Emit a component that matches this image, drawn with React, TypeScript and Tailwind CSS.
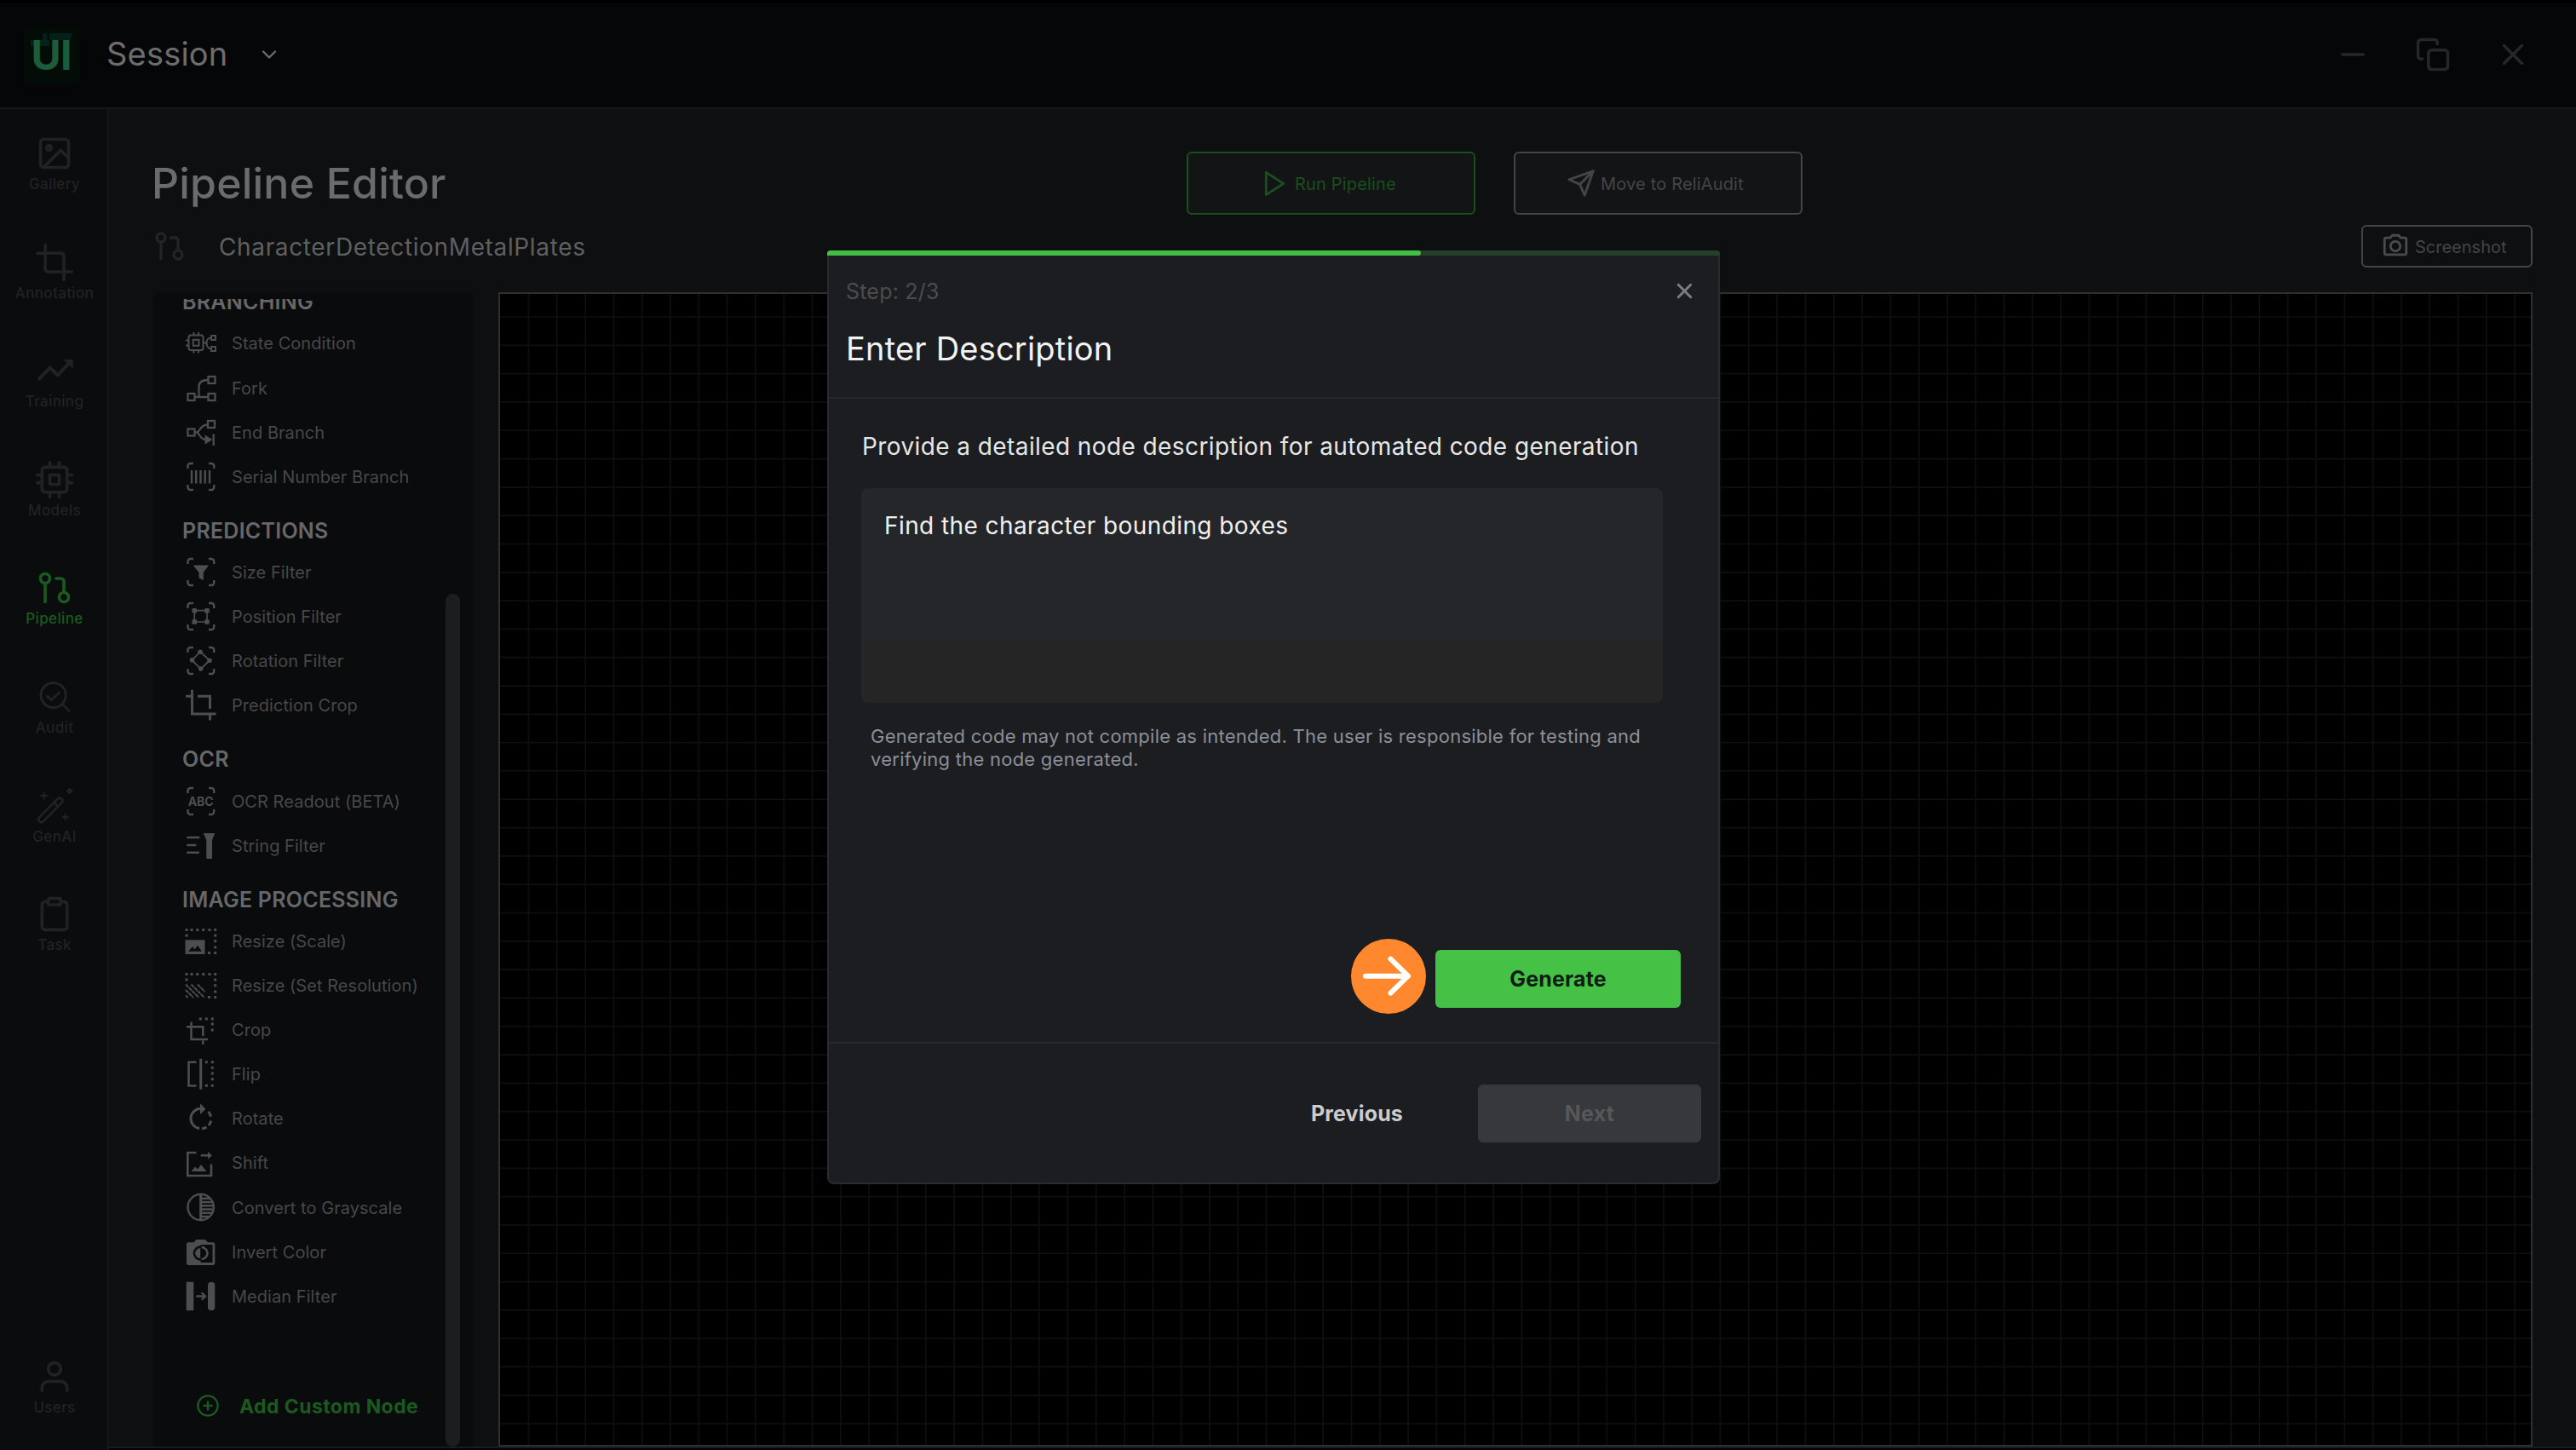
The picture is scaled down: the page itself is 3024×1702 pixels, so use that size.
import React from "react";
import { FiImage, FiCrop, FiCpu, FiGitPullRequest, FiClipboard, FiUser, FiPlay, FiSend, FiCopy, FiX, FiMinus, FiChevronDown, FiPlusCircle } from "react-icons/fi";
import { MdOutlineCameraAlt } from "react-icons/md";

/* ---------- sidebar icons ---------- */

function TrainingIcon() {
    return (
        <svg viewBox="0 0 44 44" className="size-11" fill="none" stroke="currentColor" strokeWidth="4" strokeLinecap="round" strokeLinejoin="round">
            <path d="M4.2 31.5 16.7 18.7l9 8.8L38 14.5" />
            <path d="M33 9h10.7v11z" fill="currentColor" stroke="none" />
        </svg>
    );
}

function AuditIcon() {
    return (
        <svg viewBox="0 0 44 44" className="size-11" fill="none" stroke="currentColor" strokeWidth="3">
            <circle cx="20.7" cy="20" r="14.6" />
            <path d="m31 30.5 9 8.5M12.5 20.5l5.8 5 10.2-9.5" />
        </svg>
    );
}

function WandIcon() {
    return (
        <svg viewBox="0 0 44 44" className="size-11" fill="none" stroke="currentColor" strokeWidth="2.6" strokeLinecap="round" strokeLinejoin="round">
            <path d="M25.8 13.4a2.6 2.6 0 0 1 3.8 0l1 1a2.6 2.6 0 0 1 0 3.8L9 40.2a3.4 3.4 0 0 1-4.9-4.9z" />
            <path d="m21.5 18 4.500 4.500" />
            <path d="M9.700 6.500v7M6.200 10h7M34.700 31.500v7M31.500 35h6.500" strokeWidth="2" />
            <path d="M39.700 0.500l4 4-4 4-4-4z" fill="currentColor" stroke="none" />
        </svg>
    );
}

const navItems = [
    { label: "Gallery", icon: <FiImage className="size-11" /> },
    { label: "Annotation", icon: <FiCrop className="size-11" /> },
    { label: "Training", icon: <TrainingIcon /> },
    { label: "Models", icon: <FiCpu className="size-11" /> },
    { label: "Pipeline", icon: <FiGitPullRequest className="size-11" />, active: true },
    { label: "Audit", icon: <AuditIcon /> },
    { label: "GenAI", icon: <WandIcon /> },
    { label: "Task", icon: <FiClipboard className="size-11" /> },
];

function NavItem({ label, icon, active }: { label: string; icon: React.ReactNode; active?: boolean }) {
    return (
        <div className={"flex flex-col items-center gap-1 " + (active ? "text-[#1b5a1e]" : "text-[#212224]")}>
            {icon}
            <span className="h-5 text-[17px] leading-5 font-medium tracking-[0.35px]">{label}</span>
        </div>
    );
}

/* ---------- node icons, all on a 36px grid ---------- */

const corners = <path d="M2.500 9V6a3 3 0 0 1 3-3H9M27 3h3.200a3 3 0 0 1 3 3v3M33.200 28v3a3 3 0 0 1-3 3H27M9 34H5.500a3 3 0 0 1-3-3v-3" strokeWidth="2.400" />;

function Dots({ points }: { points: number[][] }) {
    return (
        <g fill="currentColor" stroke="none">
            {points.map(([x, y]) => (
                <rect key={x + "-" + y} x={x - 1.5} y={y - 1.5} width="3" height="3" />
            ))}
        </g>
    );
}

const resizeDots = [[1, 5.5], [7, 5.5], [13.7, 5.5], [20.7, 5.5], [28, 5.5], [34.7, 5.5], [1, 12], [34.7, 12], [34.7, 18.7], [34.7, 26], [34.7, 32.5], [27.5, 32.5]];

const icons: Record<string, React.ReactNode> = {
    state: (
        <g strokeWidth="2">
            <rect x="3.5" y="9.5" width="17" height="17.5" rx="2.5" />
            <rect x="8.8" y="14.8" width="6.7" height="7" />
            <path d="M9.500 9.500V6M15 9.500V6M9.500 27v3.500M15 27v3.500M3.500 15.500H0M3.500 21.500H0M20.500 18.500h4M30 12.500h-.5c-3 0-5 2.500-5 6s2 6.800 5 6.800h.5" />
            <rect x="30" y="10" width="5" height="5" />
            <rect x="30" y="23" width="5" height="5" />
        </g>
    ),
    fork: (
        <g strokeWidth="2.3">
            <rect x="26.5" y="5" width="8" height="8" />
            <rect x="2.5" y="25" width="8" height="8" />
            <rect x="26.5" y="25" width="8" height="8" />
            <path d="M10.500 29h16M15.500 29V17c0-5 3-8 11-8" />
        </g>
    ),
    endBranch: (
        <g strokeWidth="2.3">
            <rect x="2.5" y="14.5" width="8" height="8" />
            <rect x="26" y="5" width="8" height="8" />
            <path d="M10.500 18.500h2.500c4 0 3-9 13-9M13 18.500c3 0 3 8.500 11 8.500M32.700 20.500V34" />
            <path d="M22.500 21.500 31.500 27l-9 5.500z" fill="currentColor" stroke="none" />
        </g>
    ),
    serial: (
        <>
            {corners}
            <path d="M7 11v15.500M12.200 11v15.500M17.500 11v15.500M22.700 11v15.500M28 11v15.500" strokeWidth="2.4" />
        </>
    ),
    sizeFilter: (
        <>
            {corners}
            <path d="M8.700 10.500h18.300l-6.200 8.500v9l-5.300-2.500V19z" fill="currentColor" stroke="none" />
        </>
    ),
    positionFilter: (
        <>
            {corners}
            <path d="M10.300 11.700H25V25H10.300z" strokeWidth="1.7" />
            <g fill="currentColor" stroke="none">
                <rect x="7.5" y="9" width="5.5" height="5.5" rx="1" />
                <rect x="22.3" y="9" width="5.5" height="5.5" rx="1" />
                <rect x="7.5" y="22.3" width="5.5" height="5.5" rx="1" />
                <rect x="22.3" y="22.3" width="5.5" height="5.5" rx="1" />
            </g>
        </>
    ),
    rotationFilter: (
        <>
            {corners}
            <path d="M17 8 28 18 17.700 28.500 7.500 18z" strokeWidth="1.8" />
            <g fill="currentColor" stroke="none">
                <circle cx="17" cy="8.3" r="2.8" />
                <circle cx="28" cy="18.3" r="2.8" />
                <circle cx="17.7" cy="28" r="2.8" />
                <circle cx="7.5" cy="17.7" r="2.8" />
            </g>
        </>
    ),
    predictionCrop: <path d="M7.500.7V29h28M0 8.300h7.500M14 8.300h14.500V23M28.500 29v7.500" strokeWidth="3" />,
    ocr: (
        <>
            {corners}
            <text x="17.7" y="23.5" textAnchor="middle" fill="currentColor" stroke="none" className="font-[Inter] text-[14px] font-bold">ABC</text>
        </>
    ),
    stringFilter: (
        <>
            <path d="M1.300 9h15M1.300 18h11M1.300 26.700h14.500" strokeWidth="2.5" />
            <path d="M20.700 4h13.600l-3.300 8v22h-6.700V12z" fill="currentColor" stroke="none" />
        </>
    ),
    resizeScale: (
        <>
            <Dots points={resizeDots} />
            <path d="M-.5 17.300h23v16.700h-23zM3 30.700h16l-5-7-3.500 4.500-2.500-3z" fill="currentColor" fillRule="evenodd" stroke="none" />
        </>
    ),
    resizeSet: (
        <>
            <Dots points={resizeDots} />
            <path d="M0 17.500 15.500 33M0 24l9 9M0 30.500 2.500 33M6.500 17.500 22 33M14 17.500l8.500 8.500" strokeWidth="2" strokeDasharray="4.5 0.8" />
        </>
    ),
    crop: (
        <>
            <path d="M6.500 9.500V30H26M1 15.300h19.300V26M20.300 31.500V36" strokeWidth="2.5" />
            <Dots points={[[17.3, 6], [24.3, 6], [31.3, 6], [31.3, 12], [31.3, 19]]} />
        </>
    ),
    flip: (
        <>
            <path d="M12.500 4.700H3.500v27.800h9" strokeWidth="2.6" />
            <path d="M17.700.7v36" strokeWidth="3" />
            <Dots points={[[24.3, 4.7], [31.3, 4.7], [31.3, 11.3], [31.3, 18], [31.3, 24.7], [31.3, 32.3], [24.3, 32.3]]} />
        </>
    ),
    rotate: (
        <>
            <path d="M18 7.300a11.700 11.700 0 0 0-1.800 23.300" strokeWidth="3" />
            <path d="M26.500 10.800a11.700 11.700 0 0 1 3 6M29.600 21.500a11.700 11.700 0 0 1-2.600 5.500M24.500 29a11.700 11.700 0 0 1-5.500 1.800" strokeWidth="3" />
            <path d="m17 1.300 6.500 6.400L17 14z" fill="currentColor" stroke="none" />
        </>
    ),
    shift: (
        <>
            <path d="M12.500 7H2.300v27H30V20.500" strokeWidth="2.6" />
            <path d="M17.700 10.200h10" strokeWidth="2.6" />
            <path d="m26 6 5 4.200-5 4.200zM6.500 29l4.500-5.500 3 3 4-5.500L24.500 29z" fill="currentColor" stroke="none" />
        </>
    ),
    grayscale: (
        <g strokeWidth="2.4">
            <circle cx="17.7" cy="18" r="15.2" />
            <path d="M17.700 3v30" strokeWidth="3" />
            <path d="M18 7.700h10.500M18 12h13.500M18 16.200h14.500M18 20.500h14.500M18 24.700h13M18 29h9.500" />
        </g>
    ),
    invert: (
        <>
            <path d="M12.500 4h10.500l3 3.300h6a2.300 2.300 0 0 1 2.300 2.300v22a2.300 2.300 0 0 1-2.300 2.400H3.300A2.300 2.300 0 0 1 1 31.600v-22a2.300 2.300 0 0 1 2.300-2.300h6.200z" fill="currentColor" stroke="none" />
            <path d="M17.700 10h13.800v21H17.700z" fill="#0a0b0d" stroke="none" />
            <circle cx="17.7" cy="20" r="9" fill="#0a0b0d" stroke="none" />
            <path d="M17.200 14v12a6 6 0 0 1 0-12z" fill="currentColor" stroke="none" />
            <path d="M18.500 13a7 7 0 0 1 0 14" strokeWidth="2.6" />
        </>
    ),
    median: (
        <>
            <rect x=".7" y="1.7" width="8.6" height="33.5" fill="currentColor" stroke="none" />
            <rect x="26" y="1.7" width="8.3" height="33.5" rx="4" fill="currentColor" stroke="none" />
            <path d="M12.300 18.500h10M18.700 14.200l4.300 4.300-4.300 4.300" strokeWidth="2.3" />
        </>
    ),
};

const groups = [
    {
        title: "BRANCHING",
        nodes: [["state", "State Condition"], ["fork", "Fork"], ["endBranch", "End Branch"], ["serial", "Serial Number Branch"]],
    },
    {
        title: "PREDICTIONS",
        nodes: [["sizeFilter", "Size Filter"], ["positionFilter", "Position Filter"], ["rotationFilter", "Rotation Filter"], ["predictionCrop", "Prediction Crop"]],
    },
    {
        title: "OCR",
        nodes: [["ocr", "OCR Readout (BETA)"], ["stringFilter", "String Filter"]],
    },
    {
        title: "IMAGE PROCESSING",
        nodes: [
            ["resizeScale", "Resize (Scale)"],
            ["resizeSet", "Resize (Set Resolution)"],
            ["crop", "Crop"],
            ["flip", "Flip"],
            ["rotate", "Rotate"],
            ["shift", "Shift"],
            ["grayscale", "Convert to Grayscale"],
            ["invert", "Invert Color"],
            ["median", "Median Filter"],
        ],
    },
];

function NodePanel() {
    return (
        <div className="flex h-full w-[376px] shrink-0 rounded-md bg-[#0a0b0d]">
            <div className="flex w-[343px] flex-col pt-2">
                {/* scrolled so that the first title is cut by the top edge */}
                <div className="flex-1 overflow-hidden">
                    <div className="-mt-[34.8px]">
                        {groups.map((group) => (
                            <div key={group.title}>
                                <h3 className="h-[60.2px] pt-[25px] pl-[34px] text-[25px] leading-[26px] font-semibold tracking-[0.25px] text-[#666768]">{group.title}</h3>
                                {group.nodes.map(([icon, label]) => (
                                    <div key={icon} className="flex h-[52.1px] items-center gap-[18px] pl-[38px]">
                                        <svg viewBox="0 0 36 36" className="size-9 shrink-0 overflow-visible text-[#4d4e50]" fill="none" stroke="currentColor">
                                            {icons[icon]}
                                        </svg>
                                        <span className="pt-0.5 text-[20px] tracking-[0.05px] whitespace-nowrap text-[#474849]">{label}</span>
                                    </div>
                                ))}
                            </div>
                        ))}
                    </div>
                </div>
                <button className="mb-7 flex h-10 items-center gap-[23px] pl-[50px] text-[#1b5a1e]">
                    <FiPlusCircle className="size-7" />
                    <span className="pt-0.5 text-[23px] font-bold tracking-[0.42px] whitespace-nowrap">Add Custom Node</span>
                </button>
            </div>
            <div className="mt-[354px] w-[17px] rounded-full bg-[#1c1d1f]"></div>
        </div>
    );
}

const GRID = 33.31;

function Canvas() {
    const columns = Array.from({ length: 71 }, (_, i) => 33.5 + i * GRID);
    const rows = Array.from({ length: 40 }, (_, i) => 27 + i * GRID);
    return (
        <div className="ml-[29px] h-full flex-1 overflow-hidden border-2 border-[#2e2f31] bg-black">
            <svg className="h-full w-full" stroke="#0d0f11" strokeWidth="1.7">
                {columns.map((x) => (
                    <line key={x} x1={x} x2={x} y1="0" y2="1360" />
                ))}
                {rows.map((y) => (
                    <line key={y} x1="0" x2="2400" y1={y} y2={y} />
                ))}
            </svg>
        </div>
    );
}

function DescriptionDialog() {
    return (
        <div className="absolute top-[294px] left-[971px] flex h-[1096px] w-[1048px] flex-col">
            <div className="h-1.5 shrink-0 overflow-hidden rounded-t-sm bg-[#24402a]">
                <div className="h-full w-[697px] rounded-r-sm bg-[#44bf44]"></div>
            </div>
            <div className="flex flex-1 flex-col rounded-b-lg border-2 border-t-0 border-[#2a2b30] bg-[#1c1d20]">
                <div className="border-b-2 border-[#27282c] pt-[27px] pr-[25px] pb-[34px] pl-5">
                    <div className="flex h-[30px] items-center justify-between">
                        <span className="pt-px text-[25px] tracking-[0.2px] text-[#4b4c4f]">Step: 2/3</span>
                        <FiX className="size-[29px] -translate-y-px text-[#7c7d80]" strokeWidth="2.4" />
                    </div>
                    <h2 className="mt-[29px] text-[38px] leading-[46px] tracking-[0.2px] text-[#f2f2f2]">Enter Description</h2>
                </div>
                <div className="flex flex-1 flex-col pt-[39px] pr-[44px] pb-10 pl-[38px]">
                    <p className="ml-px text-[28px] leading-[35px] tracking-[0.41px] whitespace-nowrap text-[#e6e6e7]">Provide a detailed node description for automated code generation</p>
                    <div className="mt-[31px] h-[252px] w-[941px] rounded-lg bg-linear-to-b from-[#25262a] from-70% to-[#252525] to-75% pt-[27px] pl-[27px]">
                        <p className="text-[28px] leading-[34px] tracking-[0.42px] text-[#f0f0f0]">Find the character bounding boxes</p>
                    </div>
                    <p className="mt-[26px] ml-[11px] w-[925px] text-[22px] leading-[27px] tracking-[0.25px] text-[#8b9098]">
                        Generated code may not compile as intended. The user is responsible for testing and verifying the node generated.
                    </p>
                    <button className="mt-auto h-[68px] w-[288px] self-end rounded-md bg-[#45c145] pt-0.5 text-[25px] font-bold tracking-[0.15px] text-[#101b15]">Generate</button>
                </div>
                <div className="flex h-[165px] items-start justify-end gap-[88px] border-t-2 border-[#27282c] pt-12 pr-5">
                    <button className="h-[68px] pt-0.5 text-[25px] font-bold tracking-[0.15px] text-[#cbccce]">Previous</button>
                    <button className="h-[68px] w-[262px] rounded-md bg-[#37383b] pt-0.5 text-[25px] font-bold tracking-[0.2px] text-[#55575a]">Next</button>
                </div>
            </div>

            {/* pointer badge over the generate button row */}
            <div className="absolute top-[808px] left-[615px] size-[88px] rounded-full bg-[#ff882e]">
                <svg viewBox="0 0 88 88" className="size-full" fill="none" stroke="white" strokeWidth="6" strokeLinecap="round" strokeLinejoin="round">
                    <path d="M17 43.700h50M46.500 23.700l20.500 20-20.500 20" />
                </svg>
            </div>
        </div>
    );
}

function App() {
    return (
        <div className="relative flex h-[1702px] w-[3024px] flex-col overflow-hidden bg-black pt-1 font-[Inter,sans-serif]">
            <header className="flex h-[124px] shrink-0 items-center border-b-2 border-[#16171a] bg-[#050608] pr-[53px] pl-7">
                <svg viewBox="0 0 66 66" className="size-[66px] rounded-sm bg-[#030c06]">
                    <path d="M22 7h5v8h-5zM30 7h27.500l-3 8H30z" fill="#052019" />
                    <path d="M8 15h22v7H8z" fill="#06211a" />
                    <text x="8.5" y="50" textLength="48" className="font-[Inter] text-[48px] font-bold" fill="#1b5c3c">UI</text>
                </svg>
                <span className="-mt-[3px] ml-[31px] text-[38px] tracking-[0.2px] text-[#6d6d6e]">Session</span>
                <FiChevronDown className="-mt-0.5 ml-[34px] size-7 text-[#6d6d6e]" />
                <div className="-mt-0.5 ml-auto flex gap-[52px] text-[#262728]">
                    <FiMinus className="size-[42px]" />
                    <FiCopy className="size-[42px]" />
                    <FiX className="size-[42px]" />
                </div>
            </header>

            <div className="flex flex-1">
                <nav className="flex w-[128px] shrink-0 flex-col gap-[59.6px] border-r-2 border-[#16171a] bg-[#0a0c0e] pt-[30px] pb-10 pl-0.5">
                    {navItems.map((item) => (
                        <NavItem key={item.label} {...item} />
                    ))}
                    <div className="mt-auto">
                        <NavItem label="Users" icon={<FiUser className="size-11" />} />
                    </div>
                </nav>

                <main className="mb-0.5 flex flex-1 flex-col border-b-2 border-[#1a1b1e] bg-[#0e0f11] pt-[50px] pr-[51px] pl-[52px]">
                    <div className="flex h-[74px] items-center">
                        <h1 className="w-[1213px] text-[50px] leading-[60px] font-medium tracking-[0.2px] text-[#6a6b6c]">
                            <span className="-ml-0.5">Pipeline Editor</span>
                        </h1>
                        <button className="flex h-[74px] w-[339px] items-center gap-1.5 rounded-md border-2 border-[#1c4d1f] bg-[#131416] pl-[84px] text-[20px] tracking-[0.17px] text-[#1a4f1d]">
                            <FiPlay className="size-[35px]" />
                            <span className="pt-0.5">Run Pipeline</span>
                        </button>
                        <button className="ml-[45px] flex h-[74px] w-[339px] items-center gap-1.5 rounded-md border-2 border-[#444547] bg-[#131416] pl-[60px] text-[20px] tracking-[0.17px] text-[#444546]">
                            <FiSend className="size-[34px]" />
                            <span className="pt-0.5">Move to ReliAudit</span>
                        </button>
                    </div>
                    <div className="mt-3 flex h-[50px] items-center">
                        <FiGitPullRequest className="-ml-px size-10 text-[#232426]" />
                        <span className="ml-[38px] pt-px text-[28px] tracking-[0.64px] text-[#5f6061]">CharacterDetectionMetalPlates</span>
                        <button className="ml-auto flex h-[50px] w-[201px] items-center gap-1.5 rounded-md border-2 border-[#444547] pl-[21px] text-[20px] text-[#444546]">
                            <MdOutlineCameraAlt className="size-[34px] text-[#4a4b4c]" />
                            <span className="pt-0.5">Screenshot</span>
                        </button>
                    </div>
                    <div className="mt-[29px] flex h-[1355px]">
                        <NodePanel />
                        <Canvas />
                    </div>
                </main>
            </div>

            <DescriptionDialog />
        </div>
    );
}

export default App;
